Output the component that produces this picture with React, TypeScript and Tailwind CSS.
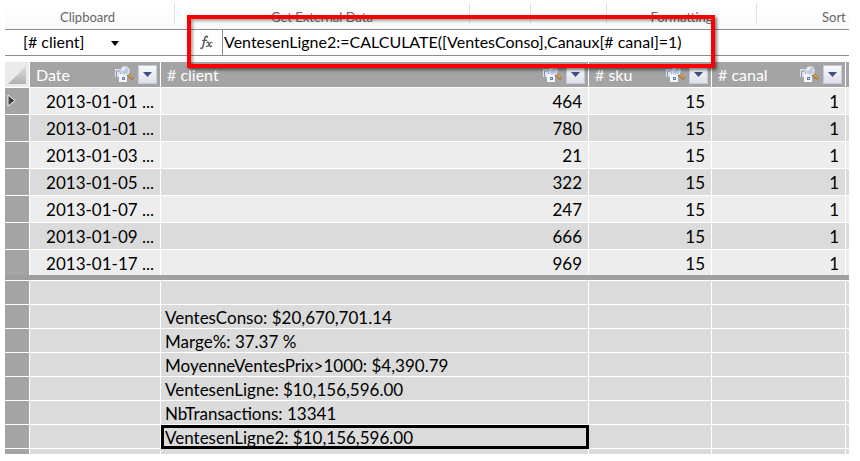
import React from "react";

const columns = ["Date", "# client", "# sku", "# canal"];

const records = [
  ["2013-01-01 ...", "464", "15", "1"],
  ["2013-01-01 ...", "780", "15", "1"],
  ["2013-01-03 ...", "21", "15", "1"],
  ["2013-01-05 ...", "322", "15", "1"],
  ["2013-01-07 ...", "247", "15", "1"],
  ["2013-01-09 ...", "666", "15", "1"],
  ["2013-01-17 ...", "969", "15", "1"],
];

const measures = [
  "",
  "VentesConso: $20,670,701.14",
  "Marge%: 37.37 %",
  "MoyenneVentesPrix>1000: $4,390.79",
  "VentesenLigne: $10,156,596.00",
  "NbTransactions: 13341",
  "VentesenLigne2: $10,156,596.00",
  "",
];

const selectedMeasure = 6;

function RelationIcon() {
  return (
    <svg width="20" height="18" viewBox="0 0 20 18" aria-hidden="true">
      <path d="M1 3h5v8H1z" fill="#dfe5f0" />
      <path d="M2.500 11V5H6" fill="none" stroke="#8296bb" />
      <path d="M5 8h8v8H5z" fill="#f3f6fb" />
      <path d="M8 11h3v3H8z" fill="#5f7fc0" />
      <path d="M9 12h1v1H9z" fill="#e4ebf7" />
      <path d="M14 8.500l4 3.500" stroke="#a8733a" strokeWidth="3.200" strokeLinecap="round" />
      <path d="M14 8l4 3.500" stroke="#e0ab62" strokeWidth="1.500" strokeLinecap="round" />
      <circle cx="11" cy="5" r="4" fill="#b9cbe8" stroke="#e3e6ec" strokeWidth="1.500" />
      <path d="M8.500 4.500a2.500 2.500 0 0 1 2.500-2" fill="none" stroke="#fff" strokeWidth="1.500" />
    </svg>
  );
}

function ColumnWidths() {
  return (
    <colgroup>
      <col className="w-[25px]" />
      <col className="w-[131px]" />
      <col />
      <col className="w-[123px]" />
      <col className="w-[134px]" />
      <col className="w-[3px]" />
    </colgroup>
  );
}

function RibbonGroup({ label, className }: { label?: string; className: string }) {
  return (
    <div className={`flex h-[21px] items-center border-[#e1e1e1] ${className}`}>
      {label && <span className="mt-1.5 whitespace-nowrap">{label}</span>}
    </div>
  );
}

export default function App() {
  return (
    <main className="overflow-hidden bg-white pt-[3px] pr-[11px] pb-[7px] pl-[5px] font-['Lato','Liberation_Sans',sans-serif] text-[16px] text-black">
      <div className="flex h-[26px] overflow-hidden bg-linear-to-b from-white to-[#f9f9f9] text-[13px] leading-4 text-[#666]">
        <RibbonGroup label="Clipboard" className="w-[170px] shrink-0 justify-center border-r pr-1" />
        <RibbonGroup label="Get External Data" className="w-[295px] shrink-0 justify-center border-r" />
        <RibbonGroup className="w-[61px] shrink-0 border-r" />
        <RibbonGroup className="w-[76px] shrink-0 border-r" />
        <RibbonGroup label="Formatting" className="w-[150px] shrink-0 justify-center border-r" />
        <RibbonGroup label="Sort" className="min-w-0 flex-1 pl-[65px]" />
      </div>

      <div className="relative flex h-[27px] items-stretch border-y border-[#8c8c8c]">
        <div className="relative w-[182px] shrink-0">
          <select aria-label="Name box" className="h-full w-[122px] appearance-none pb-0.5 pl-[18px] outline-none">
            <option>[# client]</option>
          </select>
          <svg className="pointer-events-none absolute top-[11px] left-[106px]" width="8" height="5" viewBox="0 0 8 5" aria-hidden="true">
            <path d="M0 0h8L4 5z" fill="#000" />
          </svg>
        </div>
        <button type="button" aria-label="Insert function" className="flex w-[36px] shrink-0 items-center justify-center border-r border-[#8c8c8c] pr-1 pl-2">
          <svg width="13" height="15" viewBox="0 0 13 15" fill="none" stroke="#555b63" strokeLinecap="round" aria-hidden="true">
            <path d="M7.500 2.200C6.800.8 5.300 1.200 4.800 3.400L3 11.600c-.4 1.700-1.300 2.100-2.200 1.500" strokeWidth="1.500" />
            <path d="M2.500 5.300h4.300" strokeWidth="1.200" />
            <path d="M7 7.400c1.500-.7 1.800.3 2.200 2.100s.8 2.400 2.200 1.600" strokeWidth="1.400" />
            <path d="M12 7.300c-1.300-.3-2 .9-2.800 2.200S7.400 11.700 6.300 11.300" strokeWidth="1.200" />
          </svg>
        </button>
        <input
          aria-label="Formula"
          className="min-w-0 flex-1 pb-0.5 pl-px outline-none"
          defaultValue="VentesenLigne2:=CALCULATE([VentesConso],Canaux[# canal]=1)"
        />
        <div className="pointer-events-none absolute -top-[15px] left-[182px] z-10 h-[53px] w-[528px] border-4 border-[#fb0000] shadow-[2px_2px_3px_rgba(0,0,0,0.5),inset_2px_2px_3px_rgba(0,0,0,0.35)]" />
      </div>

      <div className="mt-1.5 h-[213px] overflow-hidden text-[17px]">
        <table className="w-full table-fixed border-separate border-spacing-0">
          <ColumnWidths />
          <thead className="text-[16px]">
            <tr className="h-[26px] bg-[#a4a4a4] text-white">
              <th aria-label="Select all" className="border-r border-b border-white p-0">
                <svg width="24" height="25" viewBox="0 0 24 25" className="block" aria-hidden="true">
                  <defs>
                    <linearGradient id="corner" x1="0" y1="0" x2="0" y2="1">
                      <stop offset="0" stopColor="#dedede" />
                      <stop offset="1" stopColor="#b0b0b0" />
                    </linearGradient>
                  </defs>
                  <path d="M0 0h24v25H0z" fill="#ebebeb" />
                  <path d="M21 4v18H3z" fill="url(#corner)" />
                </svg>
              </th>
              {columns.map((name) => (
                <th key={name} className="border-r border-b border-white p-0 font-normal">
                  <div className="flex h-[25px] items-center pr-[3px] pl-1.5">
                    <span className="flex-1 text-left">{name}</span>
                    <RelationIcon />
                    <button type="button" aria-label={`Filter ${name}`} className="ml-1 flex h-[19px] w-[19px] items-center justify-center border border-[#c5cad6] bg-linear-to-b from-[#f8f9fb] to-[#dde1ea]">
                      <svg width="9" height="5" viewBox="0 0 9 5" aria-hidden="true">
                        <path d="M0 0h9L4.500 5z" fill="#3c4f86" />
                      </svg>
                    </button>
                  </div>
                </th>
              ))}
              <th className="border-b border-white p-0" />
            </tr>
          </thead>
          <tbody>
            {records.map((record, row) => (
              <tr key={row} className="h-[27px] bg-[#dbdbdb] odd:bg-[#ededed]">
                <th className="border-r border-b border-white bg-[#a4a4a4] p-0 align-top">
                  {row === 0 && (
                    <svg width="9" height="13" viewBox="0 0 9 13" className="mt-1.5 ml-0.5 block" aria-label="Current row">
                      <path d="M1 1v11l7-5.500z" fill="#3c3c3c" stroke="#f4f4f4" />
                    </svg>
                  )}
                </th>
                {record.map((value, column) => (
                  <td key={column} className="border-r border-b border-white pt-0.5 pr-1.5 pb-0 pl-0 text-right leading-6 whitespace-nowrap">
                    {value}
                  </td>
                ))}
                <td className="border-b border-white p-0" />
              </tr>
            ))}
          </tbody>
        </table>
      </div>

      <div className="h-[5px] bg-[#9f9f9f]" />

      <div className="h-[174px] overflow-hidden border-t border-white text-[17px]">
        <table className="w-full table-fixed border-separate border-spacing-0">
          <ColumnWidths />
          <tbody>
            {measures.map((measure, row) => (
              <tr key={row} className="h-[24px] bg-[#dbdbdb]">
                <th className="border-r border-b border-white bg-[#a4a4a4] p-0" />
                <td className="border-r border-b border-white p-0" />
                <td className="relative border-r border-b border-white pt-0.5 pr-0 pb-0 pl-1 leading-[21px] whitespace-nowrap">
                  {measure}
                  {row === selectedMeasure && <span className="absolute inset-0 -right-px -bottom-px border-3 border-black" />}
                </td>
                <td className="border-r border-b border-white p-0" />
                <td className="border-r border-b border-white p-0" />
                <td className="border-b border-white p-0" />
              </tr>
            ))}
          </tbody>
        </table>
      </div>
    </main>
  );
}
